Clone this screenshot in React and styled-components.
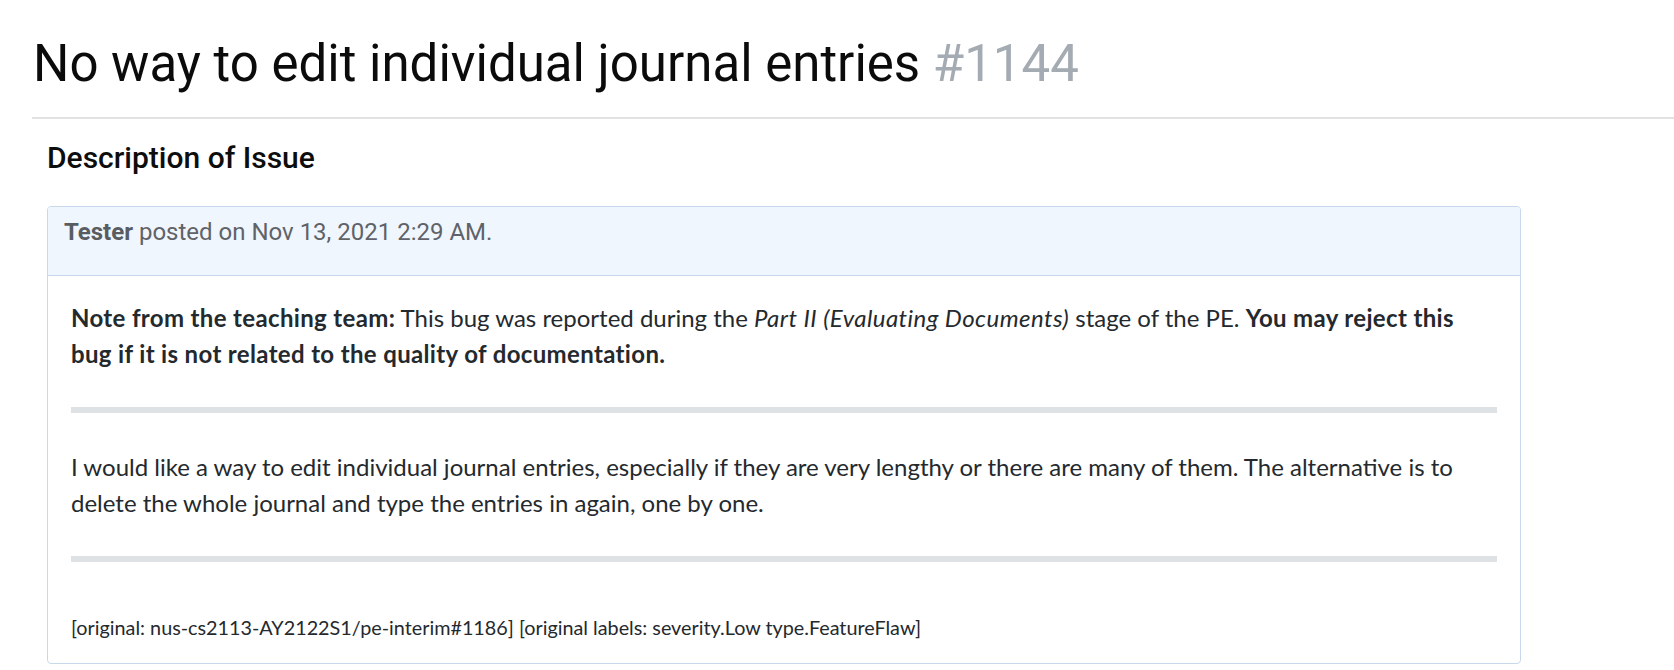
import React from "react";
import styled, { createGlobalStyle } from "styled-components";

const GlobalStyle = createGlobalStyle`
  html, body {
    margin: 0;
    padding: 0;
    background: #ffffff;
  }
  body {
    font-family: Roboto, "Liberation Sans", sans-serif;
    color: #212529;
  }
`;

const Page = styled.div`
  padding-left: 32px;
`;

const TitleBar = styled.header`
  padding-top: 34px;
  padding-bottom: 23px;
  border-bottom: 2px solid #e2e2e2;
`;

const Title = styled.h1`
  margin: 0 0 0 1px;
  font-size: 51px;
  font-weight: 400;
  line-height: 60px;
  color: #0b0b0b;
`;

const IssueNumber = styled.span`
  color: #a4abb2;
`;

const Section = styled.section`
  padding: 21px 0 0 15px;
`;

const SectionTitle = styled.h4`
  margin: 0 0 30px;
  font-size: 30px;
  font-weight: 500;
  line-height: 36px;
  color: #0d0d0d;
`;

const Card = styled.article`
  width: 1474px;
  box-sizing: border-box;
  border: 1px solid #c7d7ec;
  border-radius: 4px;
  overflow: hidden;
`;

const CardHeader = styled.div`
  background: #f0f6fe;
  border-bottom: 1px solid #c7d7ec;
  padding: 7px 16px 25px;
  font-size: 24px;
  line-height: 36px;
  color: #5f6368;
`;

const Author = styled.strong`
  font-weight: 700;
  color: #595d62;
`;

const CardBody = styled.div`
  padding: 24px 23px 21px;
  font-family: Lato, "Open Sans", sans-serif;
  font-size: 24px;
  line-height: 35.5px;
  color: #24292e;
`;

const Paragraph = styled.p`
  margin: 0;
`;

const Strong = styled.strong`
  font-weight: 700;
  letter-spacing: 0.35px;
`;

const Emphasis = styled.em`
  letter-spacing: 0.45px;
`;

const Rule = styled.hr`
  height: 6px;
  margin: 36px 0;
  padding: 0;
  border: 0;
  background: #dfe2e5;
`;

const Footnote = styled.p`
  margin: 51px 0 0;
  font-size: 19.8px;
  line-height: 29px;
`;

export default function App() {
  return (
    <>
      <GlobalStyle />
      <Page>
        <TitleBar>
          <Title>
            No way to edit individual journal entries <IssueNumber>#1144</IssueNumber>
          </Title>
        </TitleBar>
        <Section>
          <SectionTitle>Description of Issue</SectionTitle>
          <Card>
            <CardHeader>
              <Author>Tester</Author> posted on Nov 13, 2021 2:29 AM.
            </CardHeader>
            <CardBody>
              <Paragraph>
                <Strong>Note from the teaching team:</Strong> This bug was reported during the{" "}
                <Emphasis>Part II (Evaluating Documents)</Emphasis> stage of the PE.{" "}
                <Strong>You may reject this bug if it is not related to the quality of documentation.</Strong>
              </Paragraph>
              <Rule />
              <Paragraph>
                I would like a way to edit individual journal entries, especially if they are very lengthy or
                there are many of them. The alternative is to delete the whole journal and type the entries in
                again, one by one.
              </Paragraph>
              <Rule />
              <Footnote>
                [original: nus-cs2113-AY2122S1/pe-interim#1186] [original labels: severity.Low type.FeatureFlaw]
              </Footnote>
            </CardBody>
          </Card>
        </Section>
      </Page>
    </>
  );
}
